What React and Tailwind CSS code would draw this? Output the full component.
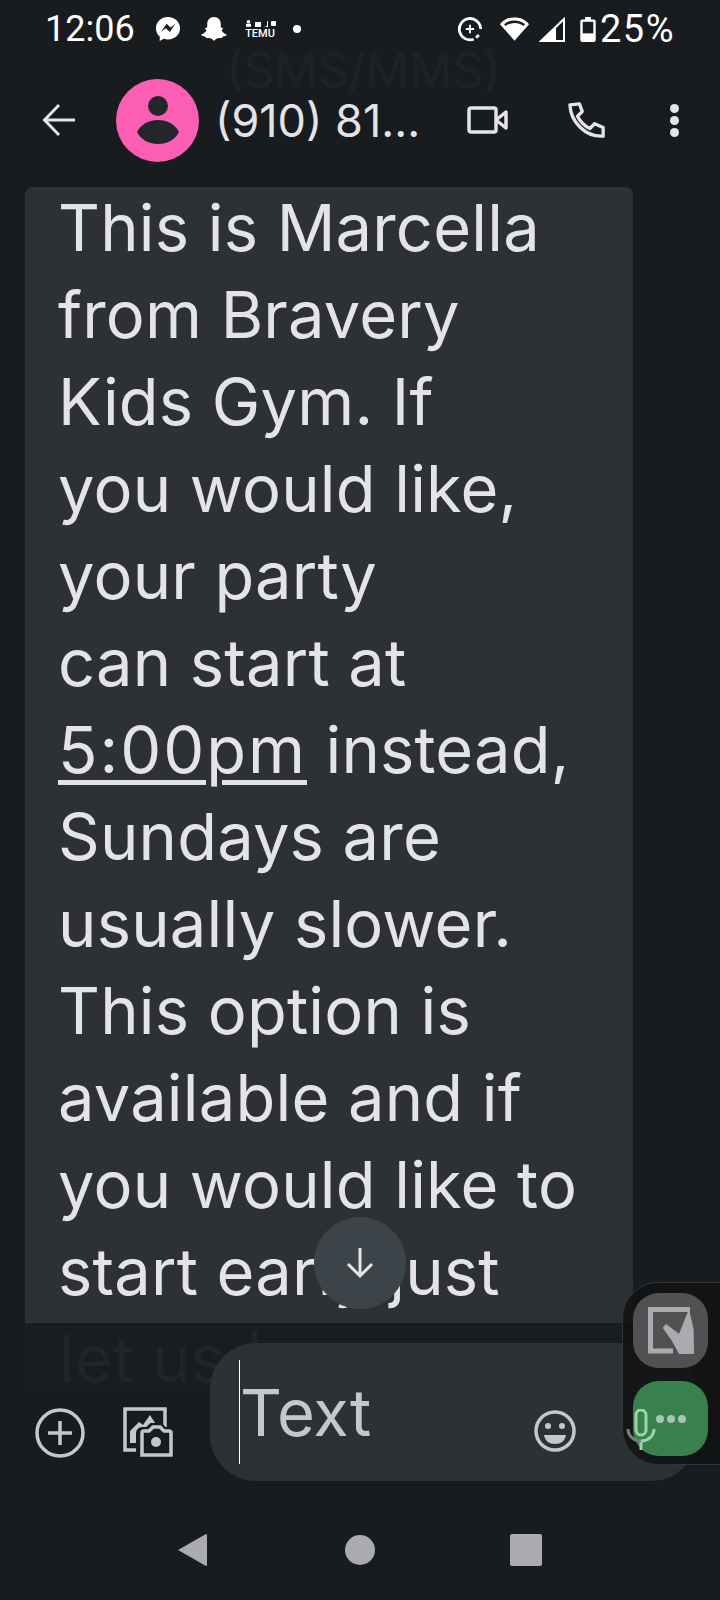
import React from 'react';

const lines = [
  'This is Marcella',
  'from Bravery',
  'Kids Gym. If',
  'you would like,',
  'your party',
  'can start at',
  null,
  'Sundays are',
  'usually slower.',
  'This option is',
  'available and if',
  'you would like to',
  'start early just',
];

const StatusBar = () => (
  <div className="flex h-[58px] items-center pl-[45px] text-white">
    <span className="w-[88px] text-[36px] leading-none">12:06</span>
    <svg className="ml-[22px]" width="26" height="26" viewBox="0 0 28 28" fill="#fff">
      <path d="M14 1C6.6 1 1 6.300 1 13.200c0 3.700 1.600 6.800 4.100 9V27l4.300-2.400c1.400.4 3 .6 4.600.6 7.400 0 13-5.200 13-12S21.400 1 14 1z" />
      <path d="M6.500 17l6-8.600 4.300 4 5-4-5.800 8.800-4.400-4z" fill="#191c1f" />
    </svg>
    <svg className="ml-[19px]" width="28" height="26" viewBox="0 0 30 28" fill="#fff">
      <path d="M15 1c4.400 0 7.300 3.300 7.300 7.600v3.900l2.600.4-1.700 2.700c1.400 2.200 3.400 3.700 5.800 4.600-.9 1.300-2.500 1.400-4.200 1.900-.8.900-1.500 2.200-3.600 1.700-2-.4-3.800.6-6.200 3-2.400-2.400-4.200-3.400-6.200-3-2.100.5-2.800-.8-3.600-1.700-1.700-.5-3.300-.6-4.200-1.900 2.400-.9 4.400-2.400 5.800-4.600l-1.700-2.700 2.600-.4V8.600C7.700 4.300 10.600 1 15 1z" />
    </svg>
    <div className="ml-[16px] flex w-[32px] flex-col items-center text-[11px] font-medium leading-[9px]">
      <svg width="31" height="7" viewBox="0 0 31 7" fill="#fff">
        <circle cx="3.500" cy="1.800" r="1.800" />
        <rect x="1" y="3.800" width="5" height="3" />
        <rect x="10" y="2" width="6" height="5" />
        <path d="M19 7l3-1V1h1v6z" />
        <rect x="26" y="1" width="5" height="5" rx="1" />
      </svg>
      <span className="mt-[2px]">TEMU</span>
    </div>
    <span className="ml-[17px] h-[8px] w-[8px] rounded-full bg-white" />
    <svg className="ml-[156px]" width="26" height="26" viewBox="0 0 28 28" fill="none" stroke="#fff" strokeWidth="3">
      <path d="M18 25A11.500 11.500 0 1 1 25.500 14" />
      <path d="M14 9.500v9M9.500 14h9" strokeWidth="2" />
      <path d="M23.500 20.500l-3 3" />
    </svg>
    <svg className="ml-[16px]" width="31" height="26" viewBox="0 0 32 26" fill="#fff">
      <path d="M16 25L1 8C5 3 10 1 16 1s11 2 15 7z" />
      <path d="M6 9C9 6.500 12 5.500 16 5.500s7 1 10 3.500" stroke="#191c1f" strokeWidth="2.500" fill="none" />
    </svg>
    <svg className="ml-[9px]" width="26" height="25" viewBox="0 0 26 25">
      <path d="M2 24L25 2v22z" fill="none" stroke="#fff" strokeWidth="2" />
      <path d="M2 24L17 10v14z" fill="#fff" />
    </svg>
    <svg className="ml-[15px]" width="16" height="27" viewBox="0 0 16 28" fill="#fff">
      <path d="M5 1h6v2.500h3a2 2 0 0 1 2 2V25a2 2 0 0 1-2 2H2a2 2 0 0 1-2-2V5.500a2 2 0 0 1 2-2h3z" />
      <rect x="2.500" y="6" width="11" height="12" fill="#191c1f" />
    </svg>
    <span className="ml-[4px] whitespace-nowrap text-[38px] leading-none tracking-[1.5px]">25%</span>
  </div>
);

const Header = () => (
  <div className="flex h-[124px] items-center pl-[42px] text-[#e3e3e8]">
    <svg width="33" height="34" viewBox="0 0 33 34" fill="none" stroke="currentColor" strokeWidth="3">
      <path d="M33 17H3M17 2L2.500 17 17 32" />
    </svg>
    <div className="ml-[41px] flex h-[83px] w-[83px] flex-col items-center justify-center rounded-full bg-[#fc5eb3]">
      <span className="h-[20px] w-[20px] rounded-full bg-[#23262a]" />
      <svg className="mt-[3px]" width="42" height="26" viewBox="0 0 42 26" fill="#23262a">
        <path d="M0 13C4 5 12 1 21 1s17 4 21 12c-4 8-12 12-21 12S4 21 0 13z" />
      </svg>
    </div>
    <span className="ml-[16px] w-[252px] whitespace-nowrap font-['Inter',sans-serif] text-[45px] leading-none">(910) 81...</span>
    <svg width="41" height="28" viewBox="0 0 41 28" fill="none" stroke="currentColor" strokeWidth="3.500" strokeLinejoin="round">
      <rect x="2" y="2" width="27" height="24" rx="2" />
      <path d="M29 14L39 6v16z" />
    </svg>
    <svg className="ml-[60px]" width="38" height="38" viewBox="0 0 40 40" fill="none" stroke="currentColor" strokeWidth="3.500" strokeLinejoin="round">
      <path d="M2 4l10-1 3 8-5 5c3 6 7 10 13 13l5-5 9 4v9C18 38 3 22 2 4z" />
    </svg>
    <div className="ml-[64px] flex flex-col gap-[3px]">
      <span className="h-[9px] w-[9px] rounded-full bg-current" />
      <span className="h-[9px] w-[9px] rounded-full bg-current" />
      <span className="h-[9px] w-[9px] rounded-full bg-current" />
    </div>
  </div>
);

const Bubble = () => (
  <div className="ml-[25px] mt-[5px] h-[1136px] w-[608px] shrink-0 overflow-hidden rounded-t-[8px] bg-[#2e3134] pl-[33px] text-[#e3e3e8]">
    <div className="-mt-[3px] font-['Inter',sans-serif] text-[65px] leading-[87px] tracking-[0.2px]">
      {lines.map((line, i) =>
        line ? (
          <div key={i} className="whitespace-nowrap">{line}</div>
        ) : (
          <div key={i} className="whitespace-nowrap">
            <span className="tracking-[2px] underline decoration-[5px] underline-offset-[7px]">5:00pm</span> instead,
          </div>
        )
      )}
    </div>
  </div>
);

const Composer = () => (
  <div className="relative z-10 mt-[20px] flex h-[138px] shrink-0 items-center pl-[35px]">
    <svg className="mt-[42px]" width="50" height="50" viewBox="0 0 50 50" fill="none" stroke="#c4c7ce" strokeWidth="3.500">
      <circle cx="25" cy="25" r="23" />
      <path d="M25 13v24M13 25h24" />
    </svg>
    <svg className="ml-[38px] mt-[42px]" width="52" height="52" viewBox="0 0 52 52" fill="none" stroke="#c4c7ce" strokeWidth="3.500">
      <path d="M20 43H2V2h40v18" />
      <path d="M7 36V24l9-9 4 3 7-10 7 11-10 1c-6 .6-11 6-11 16z" fill="#c4c7ce" stroke="none" />
      <path d="M17 48V26a2 2 0 0 1 2-2h6l4-4h8l4 4h6a2 2 0 0 1 2 2v22z" fill="#191c1f" stroke="#191c1f" strokeWidth="8" />
      <path d="M19 48V26a2 2 0 0 1 2-2h5l4-4h7l4 4h5a2 2 0 0 1 2 2v22z" fill="#191c1f" />
      <circle cx="33" cy="35" r="5" fill="#c4c7ce" stroke="none" />
    </svg>
    <div className="ml-[35px] flex h-[138px] w-[487px] items-center rounded-[46px] bg-[#2e3134] pl-[29px]">
      <span className="h-[104px] w-px bg-white" />
      <span className="w-[294px] font-['Inter',sans-serif] text-[65px] leading-none text-[#c4c7ce]">Text</span>
      <svg className="mt-[38px]" width="42" height="42" viewBox="0 0 42 42" fill="none" stroke="#c4c7ce" strokeWidth="3.500">
        <circle cx="21" cy="21" r="19" />
        <circle cx="14" cy="16" r="3" fill="#c4c7ce" stroke="none" />
        <circle cx="28" cy="16" r="3" fill="#c4c7ce" stroke="none" />
        <path d="M10 25h22c-1 6-5 9-11 9s-10-3-11-9z" fill="#c4c7ce" stroke="none" />
      </svg>
    </div>
  </div>
);

const NavBar = () => (
  <div className="flex flex-1 items-center justify-center pt-[19px]">
    <svg width="29" height="34" viewBox="0 0 29 34" fill="#a9abae">
      <path d="M28 1a1 1 0 0 1 1 1v30a1 1 0 0 1-1 1L0 17z" />
    </svg>
    <span className="ml-[138px] h-[30px] w-[30px] rounded-full bg-[#a9abae]" />
    <span className="ml-[135px] h-[32px] w-[32px] rounded-[2px] bg-[#a9abae]" />
  </div>
);

export default function App() {
  return (
    <div className="relative flex h-[1600px] w-[720px] flex-col overflow-hidden bg-[#191c1f] font-['Roboto',sans-serif]">
      <StatusBar />
      <Header />
      <Bubble />
      <Composer />
      <NavBar />

      {/* faint ghost text burned into the screen */}
      <span className="absolute left-[226px] top-[46px] font-['Inter',sans-serif] text-[48px] leading-none text-[#1f2225]">(SMS/MMS)</span>
      <div className="absolute left-[25px] top-[1323px] h-[69px] w-[608px] bg-[#1a1d20]" />
      <span className="absolute left-[59px] top-[1315px] whitespace-nowrap font-['Inter',sans-serif] text-[65px] leading-[87px] text-[#222528]">let us</span>
      <div className="absolute left-[252px] top-[1330px] h-[13px] w-[5px] bg-[#222528]" />

      {/* scroll to bottom */}
      <div className="absolute left-[314px] top-[1217px] z-20 flex h-[92px] w-[92px] items-center justify-center rounded-full bg-[#3c4349]">
        <svg width="30" height="32" viewBox="0 0 30 32" fill="none" stroke="#e3e3e8" strokeWidth="3">
          <path d="M15 1v28M3 17l12 12 12-12" />
        </svg>
      </div>

      {/* edge panel */}
      <div className="absolute left-[622px] top-[1282px] z-20 flex h-[183px] w-[100px] flex-col gap-[13px] rounded-l-[36px] border border-[#323437] bg-[#111213]/85 pl-[10px] pt-[10px]">
        <div className="flex h-[75px] w-[75px] items-center justify-center rounded-[26px] bg-[#4f5153]">
          <svg width="48" height="50" viewBox="0 0 48 50" fill="none" stroke="#a9abae" strokeWidth="5">
            <path d="M26 45H3.500V3.500H43" />
            <path d="M42 3l4.700 20.700L47 48H32l-7-13-9.300-13.300L19 18l13 9.700z" fill="#a9abae" stroke="none" />
          </svg>
        </div>
        <div className="flex h-[75px] w-[75px] items-center justify-center rounded-[26px] bg-[#38814c]">
          <span className="flex gap-[3px]">
            <span className="h-[8px] w-[8px] rounded-full bg-[#a9c4b0]" />
            <span className="h-[8px] w-[8px] rounded-full bg-[#a9c4b0]" />
            <span className="h-[8px] w-[8px] rounded-full bg-[#a9c4b0]" />
          </span>
        </div>
        <svg className="absolute left-[2px] top-[126px]" width="32" height="42" viewBox="0 0 32 42" fill="none" stroke="#9ed3a9" strokeWidth="3">
          <rect x="11" y="1" width="10" height="25" rx="5" />
          <path d="M29 20c0 7-6 12-13 12M16 32v9" />
          <path d="M3 20c0 7 6 12 13 12" stroke="#7a7c7e" />
        </svg>
      </div>
    </div>
  );
}
